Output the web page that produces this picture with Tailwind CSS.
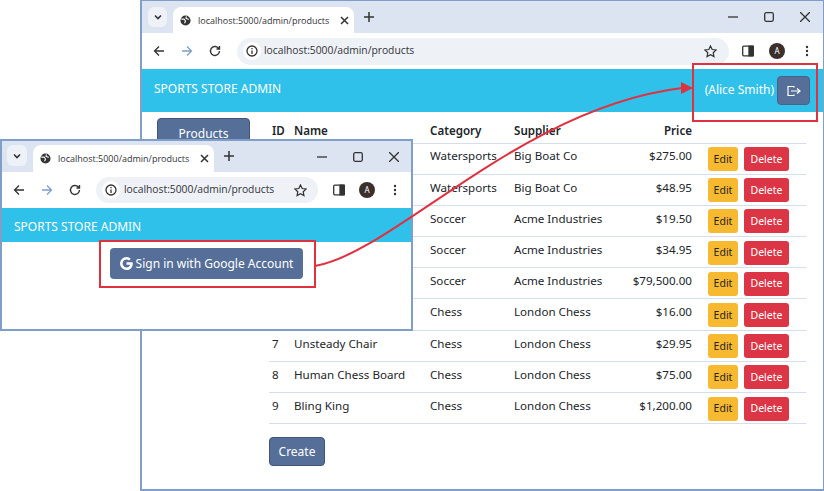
<!DOCTYPE html>
<html lang="en">
<head>
<meta charset="UTF-8">
<title>Sports Store Admin</title>
<script src="https://cdn.jsdelivr.net/npm/@tailwindcss/browser@4"></script>
</head>
<body class="bg-white">
<div class="relative w-[824px] h-[491px] overflow-hidden bg-white font-['Noto_Sans',sans-serif] text-[#212529]">

  <!-- back window -->
  <div class="absolute left-[140px] top-0 w-[684px] h-[491px] border-2 border-t border-r border-[#7f9fc8] flex flex-col bg-white">
    <div class="h-[32px] bg-[#dbe4f0] flex items-end pl-[6px] shrink-0">
      <div class="w-[19px] h-[20px] mb-[6px] rounded-md bg-[#eef2f8] flex items-center justify-center">
        <svg width="10" height="10" viewBox="0 0 10 10" fill="none" stroke="#333" stroke-width="1.6"><path d="M2 3.500l3 3 3-3"/></svg>
      </div>
      <div class="ml-[6px] w-[181px] h-[26px] bg-white rounded-t-lg flex items-center pl-[7px]">
        <svg class="shrink-0" width="11" height="11" viewBox="0 0 12 12" fill="none"><circle cx="6" cy="6" r="5.500" fill="#333"/><path d="M1.500 4.500h3l1.500 2-1 2.500M7 1.500l-.5 2 3 1.500" stroke="#fff" stroke-width="1.200"/></svg>
        <span class="ml-[7px] text-[9px] leading-none text-[#33333a] font-['Open_Sans',sans-serif] whitespace-nowrap">localhost:5000/admin/products</span>
        <svg class="ml-[11px] shrink-0" width="9" height="9" viewBox="0 0 9 9" stroke="#333" stroke-width="1.500"><path d="M1 1l7 7M8 1l-7 7"/></svg>
      </div>
      <svg class="ml-[10px] mb-[11px]" width="10" height="10" viewBox="0 0 10 10" stroke="#333" stroke-width="1.500"><path d="M5 0v10M0 5h10"/></svg>
      <div class="ml-auto mb-[11px] flex items-center gap-[26px] pr-[13px]">
        <svg width="10" height="10" viewBox="0 0 10 10" stroke="#333" stroke-width="1.300"><path d="M0 5h10"/></svg>
        <svg width="10" height="10" viewBox="0 0 10 10" fill="none" stroke="#333" stroke-width="1.300"><rect x=".7" y=".7" width="8.600" height="8.600" rx="1.500"/></svg>
        <svg width="10" height="10" viewBox="0 0 10 10" stroke="#333" stroke-width="1.300"><path d="M0 0l10 10M10 0l-10 10"/></svg>
      </div>
    </div>
    <div class="h-[36px] flex items-center pl-[11px] shrink-0 bg-white">
      <svg width="12" height="12" viewBox="0 0 12 12" fill="none" stroke="#333" stroke-width="1.300"><path d="M11 6H1.500M6 1.500L1.500 6 6 10.500"/></svg>
      <svg class="ml-[16px]" width="12" height="12" viewBox="0 0 12 12" fill="none" stroke="#7f9fc8" stroke-width="1.300"><path d="M1 6h9.500M6 1.500L10.500 6 6 10.500"/></svg>
      <svg class="ml-[16px]" width="12" height="12" viewBox="0 0 12 12" fill="none" stroke="#333" stroke-width="1.400"><path d="M10.500 6a4.500 4.500 0 1 1-1.300-3.200L10.500 4M10.500 1v3h-3"/></svg>
      <div class="ml-[16px] w-[492px] h-[27px] rounded-full bg-[#eef1f6] flex items-center pl-[6px]">
        <div class="w-[18px] h-[18px] rounded-full bg-white flex items-center justify-center">
          <svg width="12" height="12" viewBox="0 0 12 12" fill="none" stroke="#333" stroke-width="1.300"><circle cx="6" cy="6" r="5"/><path d="M6 5.500v3.500M6 3v1.300"/></svg>
        </div>
        <span class="ml-[3px] text-[10.300px] text-[#33333a] font-['Open_Sans',sans-serif]">localhost:5000/admin/products</span>
        <svg class="ml-auto mr-[12px]" width="13" height="13" viewBox="0 0 14 14" fill="none" stroke="#333" stroke-width="1.300"><path d="M7 1l1.800 3.900 4.200.5-3.100 2.900.8 4.200L7 10.400l-3.700 2.100.8-4.200L1 5.400l4.200-.5z"/></svg>
      </div>
      <svg class="ml-[13px]" width="12" height="12" viewBox="0 0 12 12" fill="none" stroke="#333" stroke-width="1.300"><rect x=".7" y="1.200" width="10.600" height="9.600" rx="1"/><rect x="7" y="1.200" width="4.300" height="9.600" fill="#333"/></svg>
      <div class="ml-[15px] w-[16px] h-[16px] rounded-full bg-[#3a2f2c] text-white text-[8px] leading-[16px] text-center">A</div>
      <svg class="ml-[20px]" width="4" height="12" viewBox="0 0 4 12" fill="#333"><circle cx="2" cy="2" r="1.200"/><circle cx="2" cy="6" r="1.200"/><circle cx="2" cy="10" r="1.200"/></svg>
    </div>
    <div class="h-[43px] bg-[#30c1ea] text-white flex items-center pl-[12px] pr-[13px] shrink-0">
      <span class="text-[12px] mb-[3px]">SPORTS STORE ADMIN</span>
      <span class="ml-auto text-[12px] mb-[2px]">(Alice Smith)</span>
      <div class="ml-[3px] w-[33px] h-[29px] rounded bg-[#566f98] border border-[#4a618a] flex items-center justify-center">
        <svg width="14" height="12" viewBox="0 0 14 12" fill="none" stroke="#fff" stroke-width="1.200"><path d="M7 2.500V1.500H1v9h6V9.500M4 6h9M10 3.500L13 6l-3 2.500"/></svg>
      </div>
    </div>
    <div class="flex items-start flex-1 pl-[15px] pt-[6px]">
      <div class="w-[93px] shrink-0">
        <button class="w-full h-[31px] rounded bg-[#566f98] border border-[#3f5678] text-white text-[12px]">Products</button>
      </div>
      <div class="ml-[19px] w-[537px]">
        <table class="w-full table-fixed border-collapse text-[11.600px]">
          <colgroup>
            <col class="w-[22px]"><col class="w-[136px]"><col class="w-[84px]"><col class="w-[106px]"><col class="w-[78px]"><col>
          </colgroup>
          <thead>
            <tr class="h-[25px] border-b border-[#d5dfec]">
              <th class="pl-[3px] pt-[1px] text-left font-semibold">ID</th><th class="pl-[3px] pt-[1px] text-left font-semibold">Name</th><th class="pl-[3px] pt-[1px] text-left font-semibold">Category</th><th class="pl-[3px] pt-[1px] text-left font-semibold">Supplier</th><th class="pr-[3px] pt-[1px] text-right font-semibold">Price</th><th></th>
            </tr>
          </thead>
          <tbody>
            <tr class="h-[31.200px] border-b border-[#d5dfec]"><td></td><td></td><td class="pl-[3px] pb-[5px]">Watersports</td><td class="pl-[3px] pb-[5px]">Big Boat Co</td><td class="pr-[3px] pb-[5px] text-right">$275.00</td><td class="pl-[13px] pt-[1px]"><div class="flex gap-[6px]"><button class="w-[30px] h-[24px] rounded-[3px] bg-[#f7b92f] text-[10.500px] pt-[1px]">Edit</button><button class="w-[45px] h-[24px] rounded-[3px] bg-[#dc3545] text-white text-[10.500px] pt-[1px]">Delete</button></div></td></tr>
            <tr class="h-[31.200px] border-b border-[#d5dfec]"><td></td><td></td><td class="pl-[3px] pb-[5px]">Watersports</td><td class="pl-[3px] pb-[5px]">Big Boat Co</td><td class="pr-[3px] pb-[5px] text-right">$48.95</td><td class="pl-[13px] pt-[1px]"><div class="flex gap-[6px]"><button class="w-[30px] h-[24px] rounded-[3px] bg-[#f7b92f] text-[10.500px] pt-[1px]">Edit</button><button class="w-[45px] h-[24px] rounded-[3px] bg-[#dc3545] text-white text-[10.500px] pt-[1px]">Delete</button></div></td></tr>
            <tr class="h-[31.200px] border-b border-[#d5dfec]"><td></td><td></td><td class="pl-[3px] pb-[5px]">Soccer</td><td class="pl-[3px] pb-[5px]">Acme Industries</td><td class="pr-[3px] pb-[5px] text-right">$19.50</td><td class="pl-[13px] pt-[1px]"><div class="flex gap-[6px]"><button class="w-[30px] h-[24px] rounded-[3px] bg-[#f7b92f] text-[10.500px] pt-[1px]">Edit</button><button class="w-[45px] h-[24px] rounded-[3px] bg-[#dc3545] text-white text-[10.500px] pt-[1px]">Delete</button></div></td></tr>
            <tr class="h-[31.200px] border-b border-[#d5dfec]"><td></td><td></td><td class="pl-[3px] pb-[5px]">Soccer</td><td class="pl-[3px] pb-[5px]">Acme Industries</td><td class="pr-[3px] pb-[5px] text-right">$34.95</td><td class="pl-[13px] pt-[1px]"><div class="flex gap-[6px]"><button class="w-[30px] h-[24px] rounded-[3px] bg-[#f7b92f] text-[10.500px] pt-[1px]">Edit</button><button class="w-[45px] h-[24px] rounded-[3px] bg-[#dc3545] text-white text-[10.500px] pt-[1px]">Delete</button></div></td></tr>
            <tr class="h-[31.200px] border-b border-[#d5dfec]"><td></td><td></td><td class="pl-[3px] pb-[5px]">Soccer</td><td class="pl-[3px] pb-[5px]">Acme Industries</td><td class="pr-[3px] pb-[5px] text-right">$79,500.00</td><td class="pl-[13px] pt-[1px]"><div class="flex gap-[6px]"><button class="w-[30px] h-[24px] rounded-[3px] bg-[#f7b92f] text-[10.500px] pt-[1px]">Edit</button><button class="w-[45px] h-[24px] rounded-[3px] bg-[#dc3545] text-white text-[10.500px] pt-[1px]">Delete</button></div></td></tr>
            <tr class="h-[31.200px] border-b border-[#d5dfec]"><td></td><td></td><td class="pl-[3px] pb-[5px]">Chess</td><td class="pl-[3px] pb-[5px]">London Chess</td><td class="pr-[3px] pb-[5px] text-right">$16.00</td><td class="pl-[13px] pt-[1px]"><div class="flex gap-[6px]"><button class="w-[30px] h-[24px] rounded-[3px] bg-[#f7b92f] text-[10.500px] pt-[1px]">Edit</button><button class="w-[45px] h-[24px] rounded-[3px] bg-[#dc3545] text-white text-[10.500px] pt-[1px]">Delete</button></div></td></tr>
            <tr class="h-[31.200px] border-b border-[#d5dfec]"><td class="pl-[3px] pb-[5px]">7</td><td class="pl-[3px] pb-[5px]">Unsteady Chair</td><td class="pl-[3px] pb-[5px]">Chess</td><td class="pl-[3px] pb-[5px]">London Chess</td><td class="pr-[3px] pb-[5px] text-right">$29.95</td><td class="pl-[13px] pt-[1px]"><div class="flex gap-[6px]"><button class="w-[30px] h-[24px] rounded-[3px] bg-[#f7b92f] text-[10.500px] pt-[1px]">Edit</button><button class="w-[45px] h-[24px] rounded-[3px] bg-[#dc3545] text-white text-[10.500px] pt-[1px]">Delete</button></div></td></tr>
            <tr class="h-[31.200px] border-b border-[#d5dfec]"><td class="pl-[3px] pb-[5px]">8</td><td class="pl-[3px] pb-[5px]">Human Chess Board</td><td class="pl-[3px] pb-[5px]">Chess</td><td class="pl-[3px] pb-[5px]">London Chess</td><td class="pr-[3px] pb-[5px] text-right">$75.00</td><td class="pl-[13px] pt-[1px]"><div class="flex gap-[6px]"><button class="w-[30px] h-[24px] rounded-[3px] bg-[#f7b92f] text-[10.500px] pt-[1px]">Edit</button><button class="w-[45px] h-[24px] rounded-[3px] bg-[#dc3545] text-white text-[10.500px] pt-[1px]">Delete</button></div></td></tr>
            <tr class="h-[31.200px] border-b border-[#d5dfec]"><td class="pl-[3px] pb-[5px]">9</td><td class="pl-[3px] pb-[5px]">Bling King</td><td class="pl-[3px] pb-[5px]">Chess</td><td class="pl-[3px] pb-[5px]">London Chess</td><td class="pr-[3px] pb-[5px] text-right">$1,200.00</td><td class="pl-[13px] pt-[1px]"><div class="flex gap-[6px]"><button class="w-[30px] h-[24px] rounded-[3px] bg-[#f7b92f] text-[10.500px] pt-[1px]">Edit</button><button class="w-[45px] h-[24px] rounded-[3px] bg-[#dc3545] text-white text-[10.500px] pt-[1px]">Delete</button></div></td></tr>
          </tbody>
        </table>
        <button class="mt-[13px] w-[56px] h-[29px] rounded bg-[#566f98] border border-[#3f5678] text-white text-[12px]">Create</button>
      </div>
    </div>
  </div>

  <!-- front window -->
  <div class="absolute left-0 top-[139px] w-[413px] h-[192px] border-2 border-[#7f9fc8] flex flex-col bg-white">
    <div class="h-[31px] bg-[#dbe4f0] flex items-end pl-[5px] shrink-0">
      <div class="w-[20px] h-[21px] mb-[6px] rounded-md bg-[#eef2f8] flex items-center justify-center">
        <svg width="10" height="10" viewBox="0 0 10 10" fill="none" stroke="#333" stroke-width="1.600"><path d="M2 3.500l3 3 3-3"/></svg>
      </div>
      <div class="ml-[6px] w-[181px] h-[27px] bg-white rounded-t-lg flex items-center pl-[7px]">
        <svg class="shrink-0" width="11" height="11" viewBox="0 0 12 12" fill="none"><circle cx="6" cy="6" r="5.500" fill="#333"/><path d="M1.500 4.500h3l1.500 2-1 2.500M7 1.500l-.5 2 3 1.500" stroke="#fff" stroke-width="1.200"/></svg>
        <span class="ml-[7px] text-[9px] leading-none text-[#33333a] font-['Open_Sans',sans-serif] whitespace-nowrap">localhost:5000/admin/products</span>
        <svg class="ml-[11px] shrink-0" width="9" height="9" viewBox="0 0 9 9" stroke="#333" stroke-width="1.500"><path d="M1 1l7 7M8 1l-7 7"/></svg>
      </div>
      <svg class="ml-[10px] mb-[11px]" width="10" height="10" viewBox="0 0 10 10" stroke="#333" stroke-width="1.500"><path d="M5 0v10M0 5h10"/></svg>
      <div class="ml-auto mb-[10px] flex items-center gap-[26px] pr-[12px]">
        <svg width="10" height="10" viewBox="0 0 10 10" stroke="#333" stroke-width="1.300"><path d="M0 5h10"/></svg>
        <svg width="10" height="10" viewBox="0 0 10 10" fill="none" stroke="#333" stroke-width="1.300"><rect x=".7" y=".7" width="8.600" height="8.600" rx="1.500"/></svg>
        <svg width="10" height="10" viewBox="0 0 10 10" stroke="#333" stroke-width="1.300"><path d="M0 0l10 10M10 0l-10 10"/></svg>
      </div>
    </div>
    <div class="h-[36px] flex items-center pl-[11px] shrink-0 bg-white">
      <svg width="12" height="12" viewBox="0 0 12 12" fill="none" stroke="#333" stroke-width="1.300"><path d="M11 6H1.500M6 1.500L1.500 6 6 10.500"/></svg>
      <svg class="ml-[16px]" width="12" height="12" viewBox="0 0 12 12" fill="none" stroke="#7f9fc8" stroke-width="1.300"><path d="M1 6h9.500M6 1.500L10.500 6 6 10.500"/></svg>
      <svg class="ml-[16px]" width="12" height="12" viewBox="0 0 12 12" fill="none" stroke="#333" stroke-width="1.400"><path d="M10.500 6a4.500 4.500 0 1 1-1.300-3.200L10.500 4M10.500 1v3h-3"/></svg>
      <div class="ml-[15px] w-[222px] h-[26px] rounded-full bg-[#eef1f6] flex items-center pl-[6px]">
        <div class="w-[18px] h-[18px] rounded-full bg-white flex items-center justify-center">
          <svg width="12" height="12" viewBox="0 0 12 12" fill="none" stroke="#333" stroke-width="1.300"><circle cx="6" cy="6" r="5"/><path d="M6 5.500v3.500M6 3v1.300"/></svg>
        </div>
        <span class="ml-[4px] text-[10.300px] text-[#33333a] font-['Open_Sans',sans-serif]">localhost:5000/admin/products</span>
        <svg class="ml-auto mr-[11px]" width="13" height="13" viewBox="0 0 14 14" fill="none" stroke="#333" stroke-width="1.300"><path d="M7 1l1.800 3.900 4.200.5-3.100 2.900.8 4.200L7 10.400l-3.700 2.100.8-4.200L1 5.400l4.200-.5z"/></svg>
      </div>
      <svg class="ml-[15px]" width="12" height="12" viewBox="0 0 12 12" fill="none" stroke="#333" stroke-width="1.300"><rect x=".7" y="1.200" width="10.600" height="9.600" rx="1"/><rect x="7" y="1.200" width="4.300" height="9.600" fill="#333"/></svg>
      <div class="ml-[14px] w-[16px] h-[16px] rounded-full bg-[#3a2f2c] text-white text-[8px] leading-[16px] text-center">A</div>
      <svg class="ml-[18px]" width="4" height="12" viewBox="0 0 4 12" fill="#333"><circle cx="2" cy="2" r="1.200"/><circle cx="2" cy="6" r="1.200"/><circle cx="2" cy="10" r="1.200"/></svg>
    </div>
    <div class="h-[34px] bg-[#30c1ea] text-white flex items-center pl-[12px] shrink-0">
      <span class="text-[12px] mt-[3px]">SPORTS STORE ADMIN</span>
    </div>
    <div class="flex justify-center pt-[6px]">
      <button class="w-[193px] h-[31px] rounded bg-[#566f98] text-white text-[12px] flex items-center justify-center gap-[3px]">
        <svg width="13" height="13" viewBox="0 0 16 16" fill="#fff"><path d="M15.545 6.558a9.420 9.420 0 0 1 .139 1.626c0 2.434-.87 4.492-2.384 5.885h.002C11.978 15.292 10.158 16 8 16A8 8 0 1 1 8 0a7.689 7.689 0 0 1 5.352 2.082l-2.284 2.284A4.347 4.347 0 0 0 8 3.166c-2.087 0-3.860 1.408-4.492 3.304a4.792 4.792 0 0 0 0 3.063h.003c.635 1.893 2.405 3.301 4.492 3.301 1.078 0 2.004-.276 2.722-.764h-.003a3.702 3.702 0 0 0 1.599-2.431H8v-3.080h7.545z"/></svg>
        Sign in with Google Account
      </button>
    </div>
  </div>

  <!-- callouts -->
  <div class="absolute left-[99px] top-[240px] w-[217px] h-[48px] border-2 border-[#e0313f]"></div>
  <div class="absolute left-[692px] top-[63px] w-[126px] h-[59px] border-2 border-[#e0313f]"></div>
  <svg class="absolute left-0 top-0" width="824" height="491" fill="none">
    <path d="M315 266C395 252 520 108 682 88" stroke="#e0313f" stroke-width="2"/>
    <path d="M681 82l12 6-12 6z" fill="#e0313f"/>
  </svg>
</div>
</body>
</html>
